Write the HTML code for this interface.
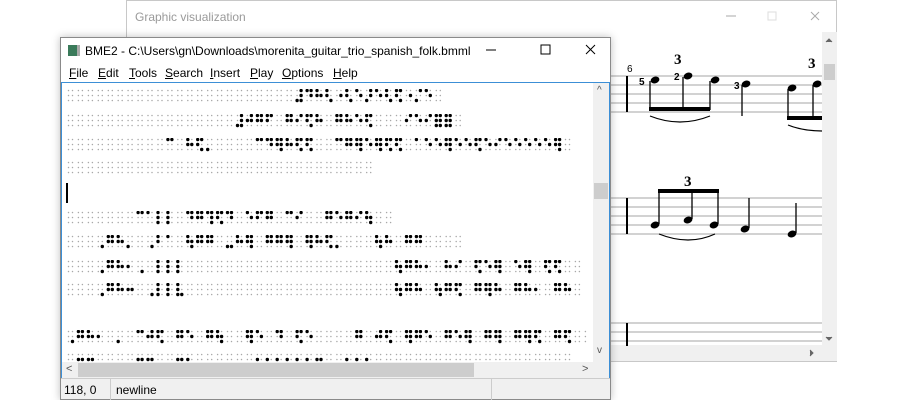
<!DOCTYPE html>
<html><head><meta charset="utf-8"><style>
*{margin:0;padding:0;box-sizing:border-box}
body{width:900px;height:400px;background:#fff;position:relative;overflow:hidden;font-family:"Liberation Sans",sans-serif}
.back{position:absolute;left:126px;top:0;width:711px;height:362px;border:1px solid #c8c8c8;background:#fff}
.back .t{position:absolute;left:8px;top:9px;font-size:12px;color:#9a9a9a}
.front{position:absolute;left:60px;top:37px;width:551px;height:363px;border:1px solid #8a8a8a;background:#fff;box-shadow:0 0 8px rgba(0,0,0,.25)}
.ft{position:absolute;left:24px;top:6px;font-size:12px;color:#000}
.menu{position:absolute;left:0;top:25px;height:20px;width:100%;font-size:12px}
.menu span{position:absolute;top:3px}
.edit{position:absolute;left:0;top:44px;width:549px;height:297px;border:1px solid #3c8fd6;overflow:hidden}
.line{position:absolute;left:5px;height:14px;font-family:"DejaVu Sans",sans-serif;font-size:10px;line-height:14px;color:transparent;white-space:pre;overflow:hidden}
.line svg{position:absolute;left:0;top:0}
.status{position:absolute;left:0;top:340px;width:549px;height:21px;background:#f0f0f0;border-top:1px solid #ccc;font-size:12px}
</style></head><body>
<div class="back"><div class="t">Graphic visualization</div>
<svg width="711" height="362" style="position:absolute;left:-1px;top:-1px">
<g stroke="#aaa" fill="none"><line x1="600" y1="16" x2="610" y2="16"/><rect x="642" y="12" width="8" height="8" stroke="#ddd"/><path d="M685 12l8 8M693 12l-8 8"/></g>
<rect x="696" y="32" width="15" height="313" fill="#f0f0f0"/><rect x="698" y="64" width="11" height="16" fill="#cdcdcd"/>
<rect x="480" y="345" width="231" height="16" fill="#f0f0f0"/>
<path d="M700 42l3-3 3 3M700 337l3 3 3-3M684 350l3 3-3 3" stroke="#666" fill="#666"/>
</svg></div>
<svg width="900" height="400" style="position:absolute;left:0;top:0">
<g stroke="#b8b8b8" stroke-width="1.2">
<line x1="600" y1="76" x2="822" y2="76"/><line x1="600" y1="85" x2="822" y2="85"/><line x1="600" y1="94" x2="822" y2="94"/><line x1="600" y1="103" x2="822" y2="103"/><line x1="600" y1="112" x2="822" y2="112"/>
<line x1="600" y1="198" x2="822" y2="198"/><line x1="600" y1="207" x2="822" y2="207"/><line x1="600" y1="216" x2="822" y2="216"/><line x1="600" y1="225" x2="822" y2="225"/><line x1="600" y1="234" x2="822" y2="234"/>
<line x1="600" y1="323" x2="822" y2="323"/><line x1="600" y1="332" x2="822" y2="332"/><line x1="600" y1="341" x2="822" y2="341"/>
</g>
<g stroke="#000" stroke-width="2"><line x1="627" y1="76" x2="627" y2="112"/><line x1="627" y1="198" x2="627" y2="234"/><line x1="627" y1="323" x2="627" y2="346"/></g>
<g fill="#000">
<ellipse cx="655" cy="80" rx="4.5" ry="3.3" transform="rotate(-20 655 80)"/><ellipse cx="688" cy="76" rx="4.5" ry="3.3" transform="rotate(-20 688 76)"/><ellipse cx="715" cy="80" rx="4.5" ry="3.3" transform="rotate(-20 715 80)"/>
<ellipse cx="746" cy="84" rx="4.5" ry="3.3" transform="rotate(-20 746 84)"/><ellipse cx="792" cy="88" rx="4.5" ry="3.3" transform="rotate(-20 792 88)"/><ellipse cx="817" cy="84" rx="4.5" ry="3.3" transform="rotate(-20 817 84)"/>
<rect x="649" y="107" width="61" height="4"/><rect x="787" y="116" width="35" height="4"/>
<ellipse cx="655" cy="225" rx="4.5" ry="3.3" transform="rotate(-20 655 225)"/><ellipse cx="688" cy="220" rx="4.5" ry="3.3" transform="rotate(-20 688 220)"/><ellipse cx="714" cy="225" rx="4.5" ry="3.3" transform="rotate(-20 714 225)"/>
<ellipse cx="745" cy="229" rx="4.5" ry="3.3" transform="rotate(-20 745 229)"/><ellipse cx="792" cy="234" rx="4.5" ry="3.3" transform="rotate(-20 792 234)"/>
<rect x="658" y="189" width="61" height="4"/>
</g>
<g stroke="#000" stroke-width="1.3">
<line x1="650" y1="81" x2="650" y2="110"/><line x1="683" y1="77" x2="683" y2="110"/><line x1="710" y1="81" x2="710" y2="110"/><line x1="742" y1="85" x2="742" y2="116"/>
<line x1="788" y1="89" x2="788" y2="119"/><line x1="813" y1="85" x2="813" y2="119"/>
<line x1="659" y1="224" x2="659" y2="191"/><line x1="692" y1="219" x2="692" y2="191"/><line x1="718" y1="224" x2="718" y2="191"/><line x1="749" y1="228" x2="749" y2="198"/><line x1="796" y1="233" x2="796" y2="203"/>
</g>
<g stroke="#000" fill="none" stroke-width="1.2"><path d="M650 116q30 12 60 0"/><path d="M659 234q30 12 56 0"/><path d="M788 125q15 6 34 6"/></g>
<g font-family="Liberation Serif,serif" font-weight="bold" font-size="15"><text x="674" y="64">3</text><text x="808" y="68">3</text><text x="684" y="186">3</text></g>
<g font-family="Liberation Sans,sans-serif" font-size="10"><text x="627" y="72">6</text><text x="639" y="85" font-weight="bold">5</text><text x="674" y="80" font-weight="bold">2</text><text x="734" y="89" font-weight="bold">3</text></g>
</svg>
<div class="front">
<svg width="551" height="25" style="position:absolute;left:0;top:0"><rect x="7" y="7" width="9" height="11" fill="#3a7a5a"/><rect x="16" y="7" width="3" height="11" fill="#aaa"/>
<line x1="425" y1="12" x2="435" y2="12" stroke="#000"/><rect x="480" y="7" width="9" height="9" fill="none" stroke="#000"/><path d="M525 7l9 9M534 7l-9 9" stroke="#000"/></svg>
<div class="ft">BME2 - C:\Users\gn\Downloads\morenita_guitar_trio_spanish_folk.bmml</div>
<div class="menu"><span style="left:8px"><u>F</u>ile</span><span style="left:37px"><u>E</u>dit</span><span style="left:68px"><u>T</u>ools</span><span style="left:104px"><u>S</u>earch</span><span style="left:149px"><u>I</u>nsert</span><span style="left:189px"><u>P</u>lay</span><span style="left:221px"><u>O</u>ptions</span><span style="left:272px"><u>H</u>elp</span></div>
<div class="edit">
<div class="line" style="top:6px;width:520px">⠀⠀⠀⠀⠀⠀⠀⠀⠀⠀⠀⠀⠀⠀⠀⠀⠀⠀⠀⠀⠀⠀⠀⠼⠙⠓⠣⠐⠣⠑⠜⠑⠣⠫⠐⠌⠑⠀</div>
<div class="line" style="top:31px;width:520px">⠀⠀⠀⠀⠀⠀⠀⠀⠀⠀⠀⠀⠀⠀⠀⠀⠀⠼⠚⠛⠋⠀⠛⠊⠫⠓⠀⠛⠓⠑⠫⠀⠀⠀⠊⠑⠊⠿⠿⠀</div>
<div class="line" style="top:55px;width:520px">⠀⠀⠀⠀⠀⠀⠀⠀⠀⠀⠉⠀⠓⠫⠄⠀⠀⠀⠀⠉⠙⠻⠓⠫⠫⠀⠀⠉⠛⠻⠑⠻⠫⠫⠀⠁⠑⠑⠻⠑⠑⠫⠑⠊⠑⠑⠑⠑⠑⠻⠀</div>
<div class="line" style="top:78px;width:520px">⠀⠀⠀⠀⠀⠀⠀⠀⠀⠀⠀⠀⠀⠀⠀⠀⠀⠀⠀⠀⠀⠀⠀⠀⠀⠀⠀⠀⠀⠀⠀</div>
<div style="position:absolute;left:4px;top:100px;width:2px;height:20px;background:#000"></div>
<div class="line" style="top:128px;width:520px">⠀⠀⠀⠀⠀⠀⠀⠉⠁⠇⠇⠀⠙⠛⠹⠫⠙⠀⠑⠋⠛⠀⠉⠊⠀⠀⠛⠑⠛⠊⠳⠀⠀</div>
<div class="line" style="top:152px;width:520px">⠀⠀⠀⠠⠛⠓⠄⠀⠠⠃⠁⠀⠳⠛⠛⠀⠤⠓⠻⠀⠛⠛⠻⠀⠻⠓⠫⠄⠀⠀⠀⠳⠓⠀⠛⠛⠀⠀⠀⠀</div>
<div class="line" style="top:177px;width:520px">⠀⠀⠀⠠⠛⠓⠂⠠⠀⠇⠇⠇⠀⠀⠀⠀⠀⠀⠀⠀⠀⠀⠀⠀⠀⠀⠀⠀⠀⠀⠀⠀⠀⠳⠛⠓⠂⠀⠓⠊⠀⠫⠑⠻⠀⠑⠻⠀⠫⠫⠀⠀</div>
<div class="line" style="top:200px;width:520px">⠀⠀⠀⠠⠛⠓⠒⠀⠠⠇⠇⠧⠀⠀⠀⠀⠀⠀⠀⠀⠀⠀⠀⠀⠀⠀⠀⠀⠀⠀⠀⠀⠀⠳⠛⠓⠀⠳⠛⠫⠀⠛⠻⠓⠀⠛⠓⠂⠀⠛⠓⠀</div>
<div class="line" style="top:247px;width:520px">⠠⠛⠓⠂⠀⠄⠀⠉⠚⠫⠀⠛⠑⠀⠛⠳⠀⠀⠻⠑⠀⠙⠀⠫⠑⠀⠀⠀⠀⠛⠀⠚⠫⠀⠻⠛⠑⠀⠛⠑⠻⠀⠛⠻⠀⠛⠻⠫⠀⠛⠫⠀⠀</div>
<div class="line" style="top:270px;width:520px">⠀⠒⠒⠀⠀⠀⠀⠒⠒⠀⠀⠒⠂⠀⠀⠀⠀⠀⠀⠂⠂⠂⠂⠂⠂⠒⠀⠀⠂⠂⠂⠀⠀⠀⠀⠀⠀⠀⠀⠀⠀⠀⠀⠀⠀⠀⠀⠀⠀⠀⠀</div>
<div style="position:absolute;left:531px;top:0;width:16px;height:279px;background:#f0f0f0"><div style="position:absolute;left:1px;top:100px;width:14px;height:16px;background:#cdcdcd"></div><span style="position:absolute;left:4px;top:2px;font-size:10px;color:#555">^</span><span style="position:absolute;left:4px;top:262px;font-size:10px;color:#555">v</span></div>
<div style="position:absolute;left:0;top:279px;width:547px;height:16px;background:#f0f0f0"><div style="position:absolute;left:16px;top:1px;width:396px;height:14px;background:#cdcdcd"></div><span style="position:absolute;left:4px;top:1px;font-size:11px;color:#555">&lt;</span><span style="position:absolute;left:520px;top:1px;font-size:11px;color:#555">&gt;</span></div>
</div>
<div class="status"><span style="position:absolute;left:3px;top:4px">118, 0</span><span style="position:absolute;left:49px;top:0;height:21px;border-left:1px solid #ccc"></span><span style="position:absolute;left:55px;top:4px">newline</span><span style="position:absolute;left:430px;top:0;height:21px;border-left:1px solid #ccc"></span></div>
</div>
<script>
(function(){
var NS="http://www.w3.org/2000/svg";
var P=9.94,X=[1.5,5.5],Y=[1.5,6.5,11.5];
var bits=[[0,0,1],[0,1,2],[0,2,4],[1,0,8],[1,1,16],[1,2,32]];
document.querySelectorAll('.line').forEach(function(el){
 var s=Array.from(el.textContent);
 var svg=document.createElementNS(NS,'svg');
 svg.setAttribute('width',Math.ceil(s.length*P)+2);svg.setAttribute('height',14);
 var h='';
 s.forEach(function(c,i){
  var v=c.codePointAt(0)-0x2800; if(v<0||v>255)return;
  bits.forEach(function(b){
   var cx=(i*P+X[b[0]]).toFixed(1),cy=Y[b[1]];
   if(v&b[2]) h+='<circle cx="'+cx+'" cy="'+cy+'" r="1.7" fill="#000"/>';
   else h+='<circle cx="'+cx+'" cy="'+cy+'" r="0.75" fill="#a8a8a8"/>';
  });
 });
 svg.innerHTML=h;
 el.appendChild(svg);
});
})();
</script>
</body></html>
